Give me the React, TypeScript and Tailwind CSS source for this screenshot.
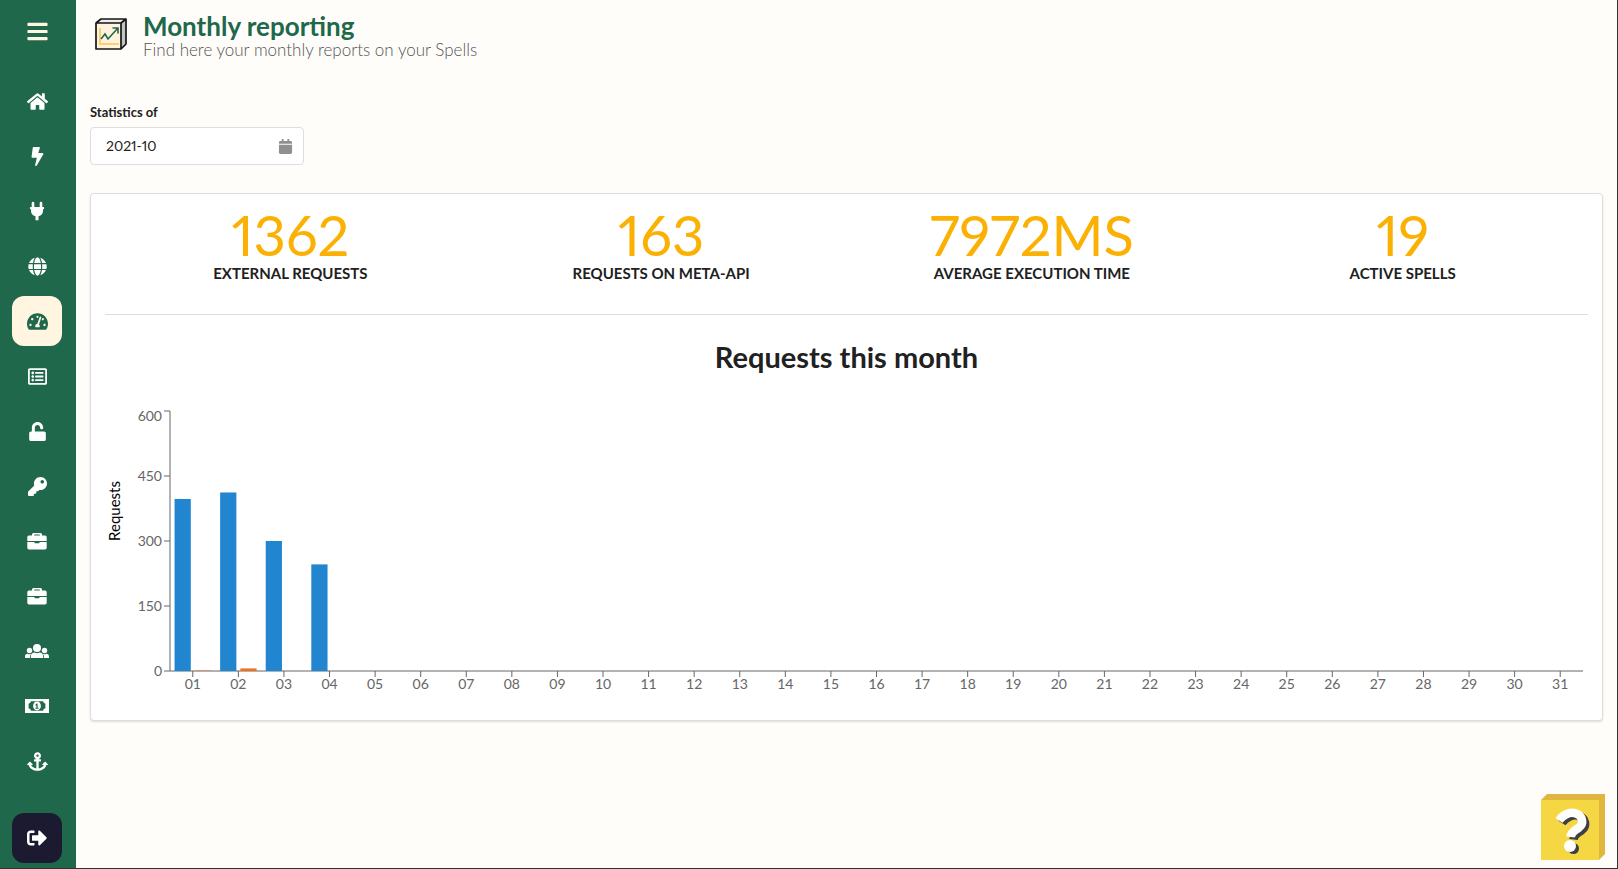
import { useEffect, useRef, useState } from "react";
import type { ComponentType } from "react";
import {
  FaAnchor,
  FaBars,
  FaBolt,
  FaCalendar,
  FaGlobe,
  FaHome,
  FaKey,
  FaRegListAlt,
  FaSignOutAlt,
  FaTachometerAlt,
  FaUnlock,
} from "react-icons/fa";

type IconProps = { className?: string };

function BanknoteIcon({ className }: IconProps) {
  return (
    <svg viewBox="0 0 24 24" className={className} fill="currentColor" aria-hidden="true">
      <path
        fillRule="evenodd"
        d="M0 5h24v14H0zM6 7.300A3 3 0 0 1 3.600 9.700v4.600A3 3 0 0 1 6 16.700h12a3 3 0 0 1 2.400-2.400V9.700A3 3 0 0 1 18 7.300z"
      />
      <path
        fillRule="evenodd"
        d="M12 7.600c2.300 0 3.900 2 3.900 4.400s-1.600 4.400-3.900 4.400S8.100 14.400 8.100 12s1.600-4.400 3.900-4.400zM10.500 10.400v1h.9v2.300h-1v1h3.200v-1h-1V9.600h-.9z"
      />
    </svg>
  );
}

function UsersIcon({ className }: IconProps) {
  return (
    <svg viewBox="0 0 24 24" className={className} fill="currentColor" aria-hidden="true">
      <circle cx="12" cy="9" r="4" />
      <circle cx="4.500" cy="11.500" r="2.700" />
      <circle cx="19.500" cy="11.500" r="2.700" />
      <path d="M5.800 19v-1.500c0-2.300 1.500-3.900 3.700-3.900.8.500 1.600.7 2.500.7s1.700-.2 2.500-.7c2.200 0 3.700 1.600 3.700 3.900V19z" />
      <path d="M0 19v-1.600c0-1.500 1-2.700 2.500-2.700 1.300.7 2.700.7 3.700.1-.8.900-1.200 2-1.200 3.200v1z" />
      <path d="M24 19v-1.600c0-1.500-1-2.700-2.500-2.700-1.300.7-2.700.7-3.700.1.8.9 1.200 2 1.200 3.200v1z" />
    </svg>
  );
}

function BriefcaseIcon({ className }: IconProps) {
  return (
    <svg viewBox="0 0 20 20" className={className} fill="currentColor" aria-hidden="true">
      <path
        fillRule="evenodd"
        d="M6.500 2h7A1.500 1.500 0 0 1 15 3.500V4.500h3A1.700 1.700 0 0 1 19.700 6.200V10H.3V6.200A1.700 1.700 0 0 1 2 4.500h3V3.500A1.500 1.500 0 0 1 6.500 2zM7.200 3.600v.9h5.600v-.9z"
      />
      <path d="M.3 11h7.200v.8c0 .3.200.5.500.5h4c.3 0 .5-.2.500-.5V11h7.200v5.800a1.700 1.700 0 0 1-1.700 1.700H2A1.700 1.700 0 0 1 .3 16.800z" />
    </svg>
  );
}

function PlugIcon({ className }: IconProps) {
  return (
    <svg viewBox="0 0 20 20" className={className} fill="currentColor" aria-hidden="true">
      <path d="M6 .7a1.300 1.300 0 0 1 1.300 1.300v4H4.700V2A1.300 1.300 0 0 1 6 .7zM14 .7A1.300 1.300 0 0 1 15.300 2v4h-2.600V2A1.300 1.300 0 0 1 14 .7z" />
      <path d="M3.500 6h13a.6.600 0 0 1 .6.600v1a.6.600 0 0 1-.6.600H16v1.300a6 6 0 0 1-4.500 5.800v4h-3v-4A6 6 0 0 1 4 9.500V8.200h-.5a.6.600 0 0 1-.6-.6v-1a.6.600 0 0 1 .6-.6z" />
    </svg>
  );
}

type NavItem = {
  label: string;
  icon: ComponentType<IconProps>;
  size: string;
  active?: boolean;
};

const NAV: NavItem[] = [
  { label: "Home", icon: FaHome, size: "size-[21px]" },
  { label: "Spells", icon: FaBolt, size: "size-[19px]" },
  { label: "Connectors", icon: PlugIcon, size: "size-5" },
  { label: "Network", icon: FaGlobe, size: "size-[19px]" },
  { label: "Monthly reporting", icon: FaTachometerAlt, size: "size-[21px]", active: true },
  { label: "Logs", icon: FaRegListAlt, size: "size-[19px]" },
  { label: "Access", icon: FaUnlock, size: "size-[19px]" },
  { label: "Keys", icon: FaKey, size: "size-[19px]" },
  { label: "Projects", icon: BriefcaseIcon, size: "size-5" },
  { label: "Portfolio", icon: BriefcaseIcon, size: "size-5" },
  { label: "Users", icon: UsersIcon, size: "size-6" },
  { label: "Billing", icon: BanknoteIcon, size: "size-6" },
  { label: "Anchors", icon: FaAnchor, size: "size-[21px]" },
];

const STATS = [
  { value: "1362", label: "External requests" },
  { value: "163", label: "Requests on Meta-API" },
  { value: "7972ms", label: "Average execution time" },
  { value: "19", label: "Active spells" },
];

const DAYS = Array.from({ length: 31 }, (_, i) => String(i + 1).padStart(2, "0"));
const EXTERNAL = [397, 412, 300, 246];
const INTERNAL = [1, 6, 0, 0];
const TICKS = [0, 150, 300, 450, 600];

function Sidebar() {
  return (
    <aside className="flex w-[76px] shrink-0 flex-col bg-[#20684b] pb-[5px] pr-[2px]">
      <button
        type="button"
        aria-label="Menu"
        className="flex h-[62px] items-center justify-center text-[#fff5e1]"
      >
        <FaBars className="size-[23px]" />
      </button>
      <nav className="mt-[14px] flex flex-col items-center gap-[5px]">
        {NAV.map(({ label, icon: Icon, size, active }) => (
          <a
            key={label}
            href="#"
            aria-label={label}
            className={
              active
                ? "flex size-[50px] items-center justify-center rounded-xl bg-[#fff5e1] text-[#20684b]"
                : "flex size-[50px] items-center justify-center rounded-xl text-white"
            }
          >
            <Icon className={size} />
          </a>
        ))}
      </nav>
      <button
        type="button"
        aria-label="Log out"
        className="mt-auto flex size-[50px] items-center justify-center self-center rounded-xl bg-[#1c1a30] text-white"
      >
        <FaSignOutAlt className="size-5" />
      </button>
    </aside>
  );
}

function ReportIcon() {
  return (
    <svg viewBox="0 0 32 32" className="size-8" fill="none" aria-hidden="true">
      <path d="M1 5 6 1h25l-5 4z" fill="#eee" />
      <path d="m26 5 5-4v25l-5 5z" fill="#c4c4c4" />
      <path d="M1 5h25v26H1z" fill="#fff3dc" />
      <path d="M5 10v16h19" stroke="#fbd071" strokeWidth="2" />
      <path d="m6 21 4-5 3 5 9.500-10.500M17.500 10h5.500v5.500" stroke="#20684b" strokeWidth="1.600" />
      <path
        d="M1 5h25v26H1zM1 5l5-4h25v25l-5 5M26 5l5-4"
        stroke="#161616"
        strokeWidth="1.700"
        strokeLinejoin="round"
      />
    </svg>
  );
}

function HelpIcon() {
  return (
    <svg viewBox="0 0 64 66" className="h-[66px] w-16" fill="none" aria-hidden="true">
      <path d="M0 6 6 0h58v60l-6 6z" fill="#e0b63e" />
      <path d="M0 6h58v60H0z" fill="#f5d643" />
      <g transform="translate(3 2.500)">
        <path d="M18 26.500c4-6 11-9 17-7 7 2.500 8 10 3 14-4 3-8 4-8.500 9.500" stroke="#3f3f46" strokeWidth="8.500" />
        <circle cx="29.500" cy="52" r="5.500" fill="#3f3f46" />
      </g>
      <path d="M18 26.500c4-6 11-9 17-7 7 2.500 8 10 3 14-4 3-8 4-8.500 9.500" stroke="#fff" strokeWidth="8.500" />
      <circle cx="29" cy="52" r="6" fill="#fff" />
    </svg>
  );
}

function RequestsChart() {
  const box = useRef<HTMLDivElement>(null);
  const [width, setWidth] = useState(1483);

  useEffect(() => {
    const el = box.current;
    if (!el) return;
    const observer = new ResizeObserver(() => setWidth(el.clientWidth));
    observer.observe(el);
    return () => observer.disconnect();
  }, []);

  const left = 65;
  const right = width - 5;
  const top = 5;
  const bottom = 265;
  const band = (right - left) / DAYS.length;
  const bar = (band * 0.8 - 4) / 2;
  const scale = (v: number) => (v / 600) * (bottom - top);

  return (
    <div ref={box} className="h-[300px] w-full overflow-hidden">
      <svg width={width} height={300} className="block" role="img" aria-label="Requests this month">
        <g stroke="#666">
          <line x1={left} x2={right} y1={bottom} y2={bottom} />
          <line x1={left} x2={left} y1={top} y2={bottom} />
          {DAYS.map((d, i) => {
            const x = left + band * (i + 0.5);
            return <line key={d} x1={x} x2={x} y1={bottom} y2={bottom + 6} />;
          })}
          {TICKS.map((t) => (
            <line key={t} x1={left - 6} x2={left} y1={bottom - scale(t)} y2={bottom - scale(t)} />
          ))}
        </g>
        <g className="fill-[#666] text-sm normal-nums">
          {DAYS.map((d, i) => (
            <text key={d} x={left + band * (i + 0.5)} y={bottom + 18} textAnchor="middle">
              {d}
            </text>
          ))}
          {TICKS.map((t) => (
            <text key={t} x={left - 8} y={Math.max(bottom - scale(t), 10) + 5} textAnchor="end">
              {t}
            </text>
          ))}
        </g>
        <text transform="translate(15 105) rotate(-90)" textAnchor="middle" className="fill-black text-[15px]">
          Requests
        </text>
        {EXTERNAL.map((v, i) => (
          <rect
            key={i}
            x={left + band * (i + 0.1)}
            y={bottom - scale(v)}
            width={bar}
            height={scale(v)}
            fill="#2185d0"
          />
        ))}
        {INTERNAL.map((v, i) => (
          <rect
            key={i}
            x={left + band * (i + 0.1) + bar + 4}
            y={bottom - scale(v)}
            width={bar}
            height={scale(v)}
            fill="#f2711c"
          />
        ))}
      </svg>
    </div>
  );
}

export default function App() {
  return (
    <div className="flex min-h-screen border-b border-r border-[#333] bg-[#fffdf9] font-['Lato',sans-serif] proportional-nums text-[#212121]">
      <Sidebar />
      <main className="min-w-0 flex-1 px-[14px]">
        <header className="flex h-[76px] items-center gap-4 pb-2 pl-[5px]">
          <ReportIcon />
          <div className="pt-1">
            <h1 className="text-[26px] font-bold leading-7 text-[#20684b]">Monthly reporting</h1>
            <p className="text-[17px] font-light leading-5 text-[#555]">
              Find here your monthly reports on your Spells
            </p>
          </div>
        </header>

        <div className="mt-[26px] flex w-[214px] flex-col gap-[5px]">
          <label htmlFor="month" className="text-[13px] font-bold leading-5">
            Statistics of
          </label>
          <div className="flex h-[38px] items-center rounded border border-[#dededf] bg-white pl-[15px] pr-[10px]">
            <input
              id="month"
              type="text"
              defaultValue="2021-10"
              className="min-w-0 flex-1 bg-transparent text-sm outline-none"
            />
            <FaCalendar className="size-[15px] text-[#909090]" aria-hidden="true" />
          </div>
        </div>

        <section className="mt-7 rounded border border-[#dededf] bg-white px-[14px] pb-[14px] shadow-[0_1px_2px_0_rgba(34,36,38,0.15)]">
          <dl className="grid grid-cols-4 border-b border-[#dededf] pb-[31px] pt-[13px]">
            {STATS.map((s) => (
              <div key={s.label} className="flex flex-col-reverse items-center uppercase">
                <dt className="text-[15px] font-bold leading-5">{s.label}</dt>
                <dd className="text-[56px] leading-[56px] text-[#fbb103]">{s.value}</dd>
              </div>
            ))}
          </dl>
          <h2 className="mb-[33px] mt-[26px] text-center text-[29px] font-bold leading-8">
            Requests this month
          </h2>
          <RequestsChart />
        </section>
      </main>
      <button type="button" aria-label="Help" className="fixed bottom-[9px] right-[13px]">
        <HelpIcon />
      </button>
    </div>
  );
}
